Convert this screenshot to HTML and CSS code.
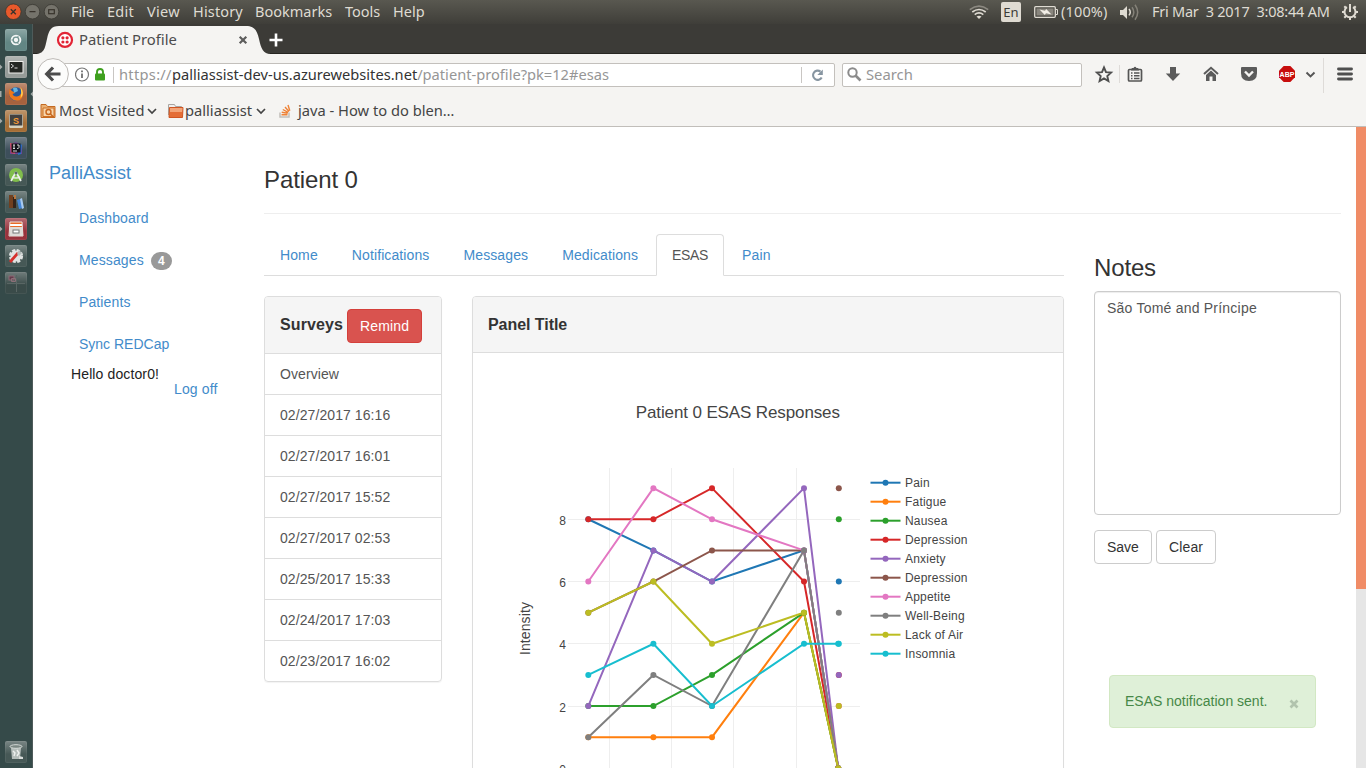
FILE: index.html
```html
<!DOCTYPE html>
<html lang="en">
<head>
<meta charset="utf-8">
<title>Patient Profile</title>
<link rel="stylesheet" href="styles.css">
</head>
<body>
<header class="topbar">
  <svg class="wm" width="62" height="24" viewBox="0 0 62 24">
    <circle cx="13.3" cy="11.7" r="7.8" fill="#e9592b" stroke="#38362f" stroke-width=".8"/>
    <circle cx="32.5" cy="11.7" r="7.3" fill="#75736b" stroke="#3a3832" stroke-width=".8"/>
    <circle cx="51.5" cy="11.7" r="7.3" fill="#75736b" stroke="#3a3832" stroke-width=".8"/>
    <path d="M10.8 9.2l5 5M15.8 9.2l-5 5M29.5 11.7h6" stroke="#38332c" stroke-width="1.3"/>
    <rect x="48.7" y="9.7" width="5.6" height="4" fill="none" stroke="#38332c" stroke-width="1.2"/>
  </svg>
  <nav class="menu">
    <span class="m1">File</span><span class="m2">Edit</span><span class="m3">View</span><span class="m4">History</span><span class="m5">Bookmarks</span><span class="m6">Tools</span><span class="m7">Help</span>
  </nav>
  <div class="tray">
    <svg class="wifi" width="22" height="24" viewBox="968 0 22 24" fill="none" stroke-width="1.7">
      <path d="M969.8 9.600Q979 2.800 988.200 9.600" stroke="#8c8981"/>
      <path d="M972.300 12Q979 7 985.700 12M974.700 14.600Q979 11.300 983.300 14.600" stroke="#dfdbd2"/>
      <path d="M976.500 16.500Q979 14.900 981.500 16.500L979 19z" fill="#dfdbd2" stroke="none"/>
    </svg>
    <span class="lang">En</span>
    <svg class="batt" width="24" height="24" viewBox="1034 0 24 24">
      <rect x="1034.700" y="6.700" width="20.600" height="10.600" rx="1" fill="none" stroke="#dfdbd2" stroke-width="1.300"/>
      <rect x="1036.500" y="8.500" width="17" height="7" fill="#89867e"/>
      <path d="M1056 9.500h1.500v5h-1.500" fill="none" stroke="#dfdbd2"/>
      <path d="M1039.500 9.500l5.500 1.300 1.200-1.800 5.300 5.500-5.500-1.300-1.200 1.800z" fill="#f2eee6"/>
    </svg>
    <span class="pct">(100%)</span>
    <svg class="vol" width="22" height="24" viewBox="1118 0 22 24" fill="none" stroke-width="1.500">
      <path d="M1120 10h3l4-4v13l-4-4h-3z" fill="#dfdbd2"/>
      <path d="M1129 9q2.500 3.200 0 6.400" stroke="#dfdbd2"/>
      <path d="M1132 7.300q3.600 5 0 10M1135 4.800q5.400 7.500 0 15" stroke="#858279"/>
    </svg>
    <span class="clock">Fri Mar&nbsp; 3 2017&nbsp; 3:08:44 AM</span>
    <svg class="gear" width="18" height="24" viewBox="1341 0 18 24" fill="none" stroke="#dfdbd2">
      <path d="M1347 7.200a5.500 5.500 0 1 0 6 0" stroke-width="2"/>
      <path d="M1350 4v8M1350 17v3M1342 12h3M1355 12h3M1344.300 17.700l2-2M1355.700 17.700l-2-2M1344.300 6.300l1.700 1.700M1355.700 6.300l-1.700 1.700" stroke-width="2"/>
    </svg>
  </div>
</header>
<div class="desktop">
  <aside class="dock">
    <span class="tile t-dash"><svg viewBox="0 0 22 22"><circle cx="11" cy="11" r="5.300" fill="#f4f7f6"/><circle cx="11" cy="11" r="2.800" fill="none" stroke="#719391" stroke-width="1.300"/><path d="M8.800 11H6.500M12 9l1.300-2M12 13l1.300 2" stroke="#719391"/></svg></span>
    <span class="tile t-term"><svg viewBox="0 0 22 22"><rect x="3.500" y="5" width="15" height="12.500" fill="#f0f0ed"/><rect x="4.500" y="6" width="13" height="10.500" fill="#242724"/><path d="M6 8l2.500 2L6 12M9.500 12h3" fill="none" stroke="#ddd"/></svg></span>
    <span class="tile t-fox"><svg viewBox="0 0 22 22"><circle cx="11" cy="11" r="6.800" fill="#25599d"/><path d="M8 5q2-1 4 0l1 3-4 2z" fill="#63b4df"/><path d="M4.500 6q-2 8 4 11 7 2.500 9.500-4V8l-2-3q1.500 8-4 8.500-3.500.5-4.500-2.500l2.500-1-3-2z" fill="#ed781b"/><path d="M15.500 4q4 6 1 10l-1 1q1.500-5 0-11z" fill="#ffd154"/></svg></span>
    <span class="tile t-subl"><svg viewBox="0 0 22 22"><rect x="4" y="4" width="14" height="14" rx="1.500" fill="#d6d0bc"/><rect x="4.700" y="4.500" width="12.600" height="11" fill="#424140"/><text x="11" y="13.700" text-anchor="middle" class="ic-s">S</text></svg></span>
    <span class="tile t-ij"><svg viewBox="0 0 22 22"><path d="M5 8l6-3 6 4 0 8H5z" fill="#754391"/><path d="M5 6l5 1v10l-4-1z" fill="#d65269"/><path d="M14 6l3 2-1 9-3 1z" fill="#2770c9"/><rect x="6.500" y="6.500" width="9" height="9" fill="#121319"/><path d="M8 8h2M9 8v3.500M8 11.500h2M12 8h2v2.500q0 1-2 1M8 14h4" fill="none" stroke="#eee" stroke-width=".9"/></svg></span>
    <span class="tile t-dark"><svg viewBox="0 0 22 22"><circle cx="11" cy="11" r="7" fill="#80bd4c"/><path d="M11 8l-5 9M11 8l5 9M7 13q4 2 8 0" fill="none" stroke="#ecf1eb" stroke-width="1.700"/><circle cx="11" cy="9" r="1.500" fill="#5b6968"/></svg></span>
    <span class="tile t-dark"><svg viewBox="0 0 22 22"><path d="M4 4h4v13H4z" fill="#714020"/><path d="M8 6h3v11H8z" fill="#34251c"/><path d="M9 4h2v4H9z" fill="#b57742"/><path d="M12 9l3-1 3 9-4 1z" fill="#4587d9"/><path d="M15 8l2-1 2 10-2 1z" fill="#a7caf0"/></svg></span>
    <span class="tile t-red"><svg viewBox="0 0 22 22"><path d="M5 4h12v6H5z" fill="#e96b29"/><path d="M5 6h12v2H5z" fill="#fff"/><path d="M5 4h12l1 14H4z" fill="none" stroke="#eee4de"/><rect x="4.500" y="9" width="13.500" height="9" rx="1" fill="#dedbd7"/><rect x="8" y="12" width="6" height="3" fill="#fff" stroke="#777"/></svg></span>
    <span class="tile t-dark"><svg viewBox="0 0 22 22"><circle cx="11" cy="11" r="5.600" fill="#e0e3e2" stroke="#e0e3e2" stroke-width="3" stroke-dasharray="3 1.400"/><path d="M5 17l8-9" stroke="#d6312d" stroke-width="2.800"/><path d="M12 9l2-4 3 3-3 3z" fill="#b4bcba"/></svg></span>
    <span class="tile t-work"><svg viewBox="0 0 22 22"><path d="M11.500 3v17M2 11.500h18" stroke="#596664"/><rect x="4" y="4" width="5" height="4" fill="#663b4c" stroke="#8c6c77"/><path d="M6.500 6.500h4v3h-4z" fill="none" stroke="#8c7078"/></svg></span>
    <span class="tile t-dark t-trash"><svg viewBox="0 0 22 22"><path d="M6 7l1 11h8l1-11z" fill="#b4bdba"/><ellipse cx="11" cy="5.500" rx="6" ry="1.800" fill="#7a8783" stroke="#d5dbd8"/><path d="M8 10l2 2-1 3M12 9l2 3-2 3" stroke="#edf0ee" stroke-width="1.400" fill="none"/><path d="M14 15l4 1v2h-4z" fill="#d8dcda"/></svg></span>
    <svg class="marks" width="33" height="260" viewBox="0 24 33 260" fill="#a4aaa8"><path d="M0 64.500l2.500 2.500L0 69.500zM0 118.500l2.500 2.500-2.500 2.500zM0 226.500l2.500 2.500-2.500 2.500zM33 91.500l-2.500 2.500 2.500 2.500zM0 91h1.500v6H0z"/></svg>
  </aside>
  <section class="browser">
    <div class="tabstrip">
      <svg class="tabshape" width="246" height="30" viewBox="33 24 246 30"><path d="M33 54h2c10 0 10-7 12-15 2-9 4-13 12-13h187c9 0 11 5 13 13 2 9 4 15 12 15h8z" fill="#f5f4f2"/>
        <circle cx="65" cy="39.900" r="7" fill="#fff" stroke="#e22435" stroke-width="2.200"/><g fill="#e22435"><circle cx="62.900" cy="37.800" r="1.600"/><circle cx="67.100" cy="37.800" r="1.600"/><circle cx="62.900" cy="42" r="1.600"/><circle cx="67.100" cy="42" r="1.600"/></g>
        <path d="M239.700 36.700l6.600 6.600M246.300 36.700l-6.600 6.600" stroke="#5d5d5c" stroke-width="2.200"/></svg>
      <span class="tabtitle">Patient Profile</span>
      <svg class="plus" width="14" height="14"><path d="M7 .5v13M.5 7h13" stroke="#fff" stroke-width="2.600"/></svg>
    </div>
    <div class="navbar">
      <svg class="back" width="34" height="34"><circle cx="17" cy="17" r="15.400" fill="#fcfcfb" stroke="#bdbab6"/><path d="M17 10.500L10.700 17l6.300 6.500M11 17h13.500" fill="none" stroke="#4c4c4c" stroke-width="3.200"/></svg>
      <div class="url">
        <svg width="43" height="22" viewBox="3 0 43 22"><circle cx="10" cy="10.500" r="6.500" fill="none" stroke="#777" stroke-width="1.200"/><path d="M10 9.500V14M10 6.500v1.800" stroke="#666" stroke-width="1.700"/><rect x="23" y="9.500" width="10" height="7" rx="1" fill="#3fa01f"/><path d="M25 10.500V8a3 3 0 0 1 6 0v2.500" fill="none" stroke="#3fa01f" stroke-width="1.900"/><path d="M41.500 3v16" stroke="#c9c6c3"/></svg>
        <span class="addr"><span class="a1">https://</span><b>palliassist-dev-us.azurewebsites.net</b><span class="a3">/patient-profile?pk=12#esas</span></span>
        <svg class="reload" width="34" height="22" viewBox="800 63 34 22"><path d="M801.500 66v16" stroke="#c9c6c3"/><path d="M820.500 70.600a4.600 4.600 0 1 0 1.200 5.800" fill="none" stroke="#8795a1" stroke-width="2.100"/><path d="M822.800 68.500v5.500h-5.500z" fill="#8795a1"/></svg>
      </div>
      <div class="search"><svg width="22" height="22"><circle cx="9.500" cy="8.500" r="4.200" fill="none" stroke="#8b8b8b" stroke-width="2"/><path d="M12.500 11.500l5 5" stroke="#8b8b8b" stroke-width="2.600"/></svg><span>Search</span></div>
      <svg class="tools" width="284" height="44" viewBox="1082 52 284 44">
        <path d="M1104 67.500l2 4.600 5.100.5-3.800 3.400 1.100 5-4.400-2.600-4.400 2.600 1.100-5-3.800-3.400 5.100-.5z" fill="none" stroke="#4f4f4f" stroke-width="1.900"/>
        <path d="M1119.500 65v18M1323.500 58v35" stroke="#dedbd8"/>
        <path d="M1129.500 69.500h11q1 0 1 1v9.500q0 1-1 1h-11q-1 0-1-1v-9.500q0-1 1-1z" fill="#f5f4f2" stroke="#555" stroke-width="1.700"/><path d="M1131 69.500l1-1.500h1.500q1.500-2.500 3 0h1.500l1 1.500v1h-8z" fill="#555"/><path d="M1131 73h1.500M1134 73h5.500M1131 75.800h1.500M1134 75.800h5.500M1131 78.600h1.500M1134 78.600h5.500" stroke="#555" stroke-width="1.500"/>
        <path d="M1170 67h6v6.500h4.200L1173 81l-7.200-7.500h4.200z" fill="#5b5b5b"/>
        <path d="M1204 74l7-6.200 7 6.200" fill="none" stroke="#5b5b5b" stroke-width="2"/><path d="M1206 75l5-4.500 5 4.500v6h-3.500v-4.500h-3V81h-3.500z" fill="#5b5b5b"/>
        <path d="M1241 68q0-1 1-1h14q1 0 1 1v5q0 8-8 8t-8-8z" fill="#5b5b5b"/><path d="M1245 71.500l4 4 4-4" fill="none" stroke="#f5f4f2" stroke-width="2.400"/>
        <path d="M1283.700 66h6.600l4.700 4.700v6.600l-4.700 4.700h-6.600l-4.700-4.700v-6.600z" fill="#c70d0d"/><text x="1287" y="76.800" text-anchor="middle" class="ic-abp">ABP</text>
        <path d="M1306.500 72.500l4 4 4-4" fill="none" stroke="#555" stroke-width="1.900"/>
        <path d="M1338.500 69h13M1338.500 74h13M1338.500 79h13" stroke="#4f4f4f" stroke-width="2.900" stroke-linecap="round"/>
      </svg>
    </div>
    <div class="bookmarks">
      <svg width="16" height="16" viewBox="0 0 16 16"><path d="M1 1.500h5l1.500 2H15v11H1z" fill="#eab174" stroke="#c46a22"/><path d="M3 5h11v8.500H3z" fill="#f6d6ad" stroke="#cd6f23"/><circle cx="8.500" cy="9" r="2.500" fill="none" stroke="#c9661c" stroke-width="1.400"/><path d="M10.500 11l3 3" stroke="#c9661c" stroke-width="1.500"/></svg>
      <span class="b1">Most Visited</span>
      <svg class="chev" width="10" height="8"><path d="M1 2l4 4 4-4" fill="none" stroke="#444" stroke-width="1.700"/></svg>
      <svg class="fold" width="17" height="16" viewBox="0 0 17 16"><path d="M1.500 12V1.500h6l1 2h6V12" fill="#eee" stroke="#a9a5a1"/><path d="M2.500 4.500H16l-.5 10H2z" fill="#e46d36" stroke="#cf5522"/><path d="M3 5h12.500l-.5 4H3z" fill="#f2a478"/></svg>
      <span class="b2">palliassist</span>
      <svg class="chev" width="10" height="8"><path d="M1 2l4 4 4-4" fill="none" stroke="#444" stroke-width="1.700"/></svg>
      <svg class="so" width="16" height="16" viewBox="0 0 16 16" fill="none"><path d="M2 9.500v4.500h9V9.500" stroke="#c1bdb9" stroke-width="1.500"/><path d="M3.500 11.800h6M3.700 9.200l6 1M4.800 6.500l5.300 2.800M7 4l4 4.500M10 2l1.800 5.800" stroke="#ef8236" stroke-width="1.400"/></svg>
      <span class="b3">java - How to do blen…</span>
    </div>
    <main class="page">
      <nav class="side">
        <a class="brand">PalliAssist</a>
        <a>Dashboard</a><a>Messages <span class="badge">4</span></a><a>Patients</a><a class="sync">Sync REDCap</a>
        <div class="hello">Hello doctor0!</div>
        <div class="logoff">Log off</div>
      </nav>
      <div class="content">
        <h1>Patient 0</h1>
        <div class="cols">
          <div class="left">
            <div class="tabs"><a>Home</a><a>Notifications</a><a>Messages</a><a>Medications</a><a class="active">ESAS</a><a>Pain</a></div>
            <div class="panels">
              <section class="panel surveys">
                <div class="phead"><b>Surveys</b><button class="remind">Remind</button></div>
                <div class="item">Overview</div><div class="item">02/27/2017 16:16</div><div class="item">02/27/2017 16:01</div><div class="item">02/27/2017 15:52</div><div class="item">02/27/2017 02:53</div><div class="item">02/25/2017 15:33</div><div class="item">02/24/2017 17:03</div><div class="item">02/23/2017 16:02</div>
              </section>
              <section class="panel chartpanel">
                <div class="phead"><b>Panel Title</b></div>
                <svg class="chart" id="chart" width="590" height="460" viewBox="473 353 590 460"></svg>
              </section>
            </div>
          </div>
          <aside class="notes">
            <h2>Notes</h2>
            <div class="area">São Tomé and Príncipe</div>
            <div class="btns"><button>Save</button><button class="clear">Clear</button></div>
            <div class="alert"><span>ESAS notification sent.</span><svg width="10" height="10"><path d="M1.500 1.500l7 7M8.500 1.500l-7 7" stroke="#b1c3ad" stroke-width="2.700"/></svg></div>
          </aside>
        </div>
      </div>
      <div class="scroll"><div class="thumb"></div></div>
    </main>
  </section>
</div>
<script src="chart.js"></script>
</body>
</html>
```
FILE: styles.css
```css
* { box-sizing: border-box; }
body { margin: 0; width: 1366px; height: 768px; overflow: hidden; display: flex; flex-direction: column; font: 14px/20px "Liberation Sans", Arial, sans-serif; color: #333; background: #fff; }
svg { display: block; flex: none; }
span, a { white-space: nowrap; }
.topbar { height: 24px; flex: none; display: flex; background: linear-gradient(#595850, #3f3e39); font: 14.5px/22px "Noto Sans", sans-serif; color: #dfdbd2; }
.wm { margin-right: 9px; }
.menu { display: flex; flex: 1; }
.m1 { width: 36px; }
.m2 { width: 40px; letter-spacing: .3px; }
.m3 { width: 46px; letter-spacing: .3px; }
.m4 { width: 62px; letter-spacing: .15px; }
.m5 { width: 90px; }
.m6 { width: 48px; }
.tray { width: 398px; display: flex; align-items: center; }
.lang { width: 20px; height: 20px; margin: 0 13px 0 11px; border-radius: 2px; background: #dfdbd2; color: #3c3b37; font-size: 13px; line-height: 20px; text-align: center; }
.pct { width: 48px; margin: 0 0 2px 3px; letter-spacing: .15px; }
.vol { margin-left: 9px; }
.clock { width: 189px; margin: 0 0 2px 12px; letter-spacing: -.24px; }
.desktop { display: flex; flex: 1; min-height: 0; }
.dock { width: 33px; padding: 5px 0 5px 5px; display: flex; flex-direction: column; gap: 5px; background: #354a49; border-right: 1px solid #4e5b5a; position: relative; }
.tile { width: 22px; height: 22px; flex: none; border-radius: 2px; border: 1px solid rgba(255,255,255,.06); background-image: linear-gradient(rgba(255,255,255,.28), rgba(255,255,255,0) 60%); background-origin: border-box; }
.tile svg { width: 22px; height: 22px; margin: -1px; }
.t-dash { background-color: #628684; }
.t-term { background-color: #969b98; }
.t-fox { background-color: #a6623e; }
.t-subl { background-color: #a56e36; }
.t-ij { background-color: #3d4f5b; }
.t-dark { background-color: #465856; }
.t-red { background-color: #98323c; }
.t-work { background-color: #3a4b49; }
.t-trash { margin-top: auto; }
.marks { position: absolute; left: 0; top: 0; }
.ic-s { font: bold 9px "Liberation Sans", sans-serif; fill: #f49b37; }
.ic-abp { font: bold 7px "Liberation Sans", sans-serif; fill: #fff; }
.browser { flex: 1; display: flex; flex-direction: column; background: #f5f4f2; font-family: "Noto Sans", sans-serif; min-width: 0; }
.tabstrip { height: 30px; flex: none; background: #3c3b37; border-bottom: 1px solid #262521; display: flex; align-items: flex-start; }
.tabshape { margin-right: -200px; }
.tabtitle { width: 190px; padding-top: 5px; color: #4c4c4c; z-index: 1; font-size: 14.8px; }
.plus { margin-top: 9px; }
.navbar { height: 43px; flex: none; display: flex; align-items: center; }
.back { margin: -3px 0 0 3px; z-index: 1; }
.url { width: 783px; height: 24px; margin: -2px 0 0 -18px; padding-left: 22px; background: #fff; border: 1px solid #c3c0bc; border-radius: 2px; display: flex; align-items: center; font-size: 14.65px; color: #969696; }
.addr { margin: 0 0 2px 1px; flex: 1; display: flex; }
.a1 { width: 53px; letter-spacing: .3px; }
.addr b { font-weight: normal; color: #333; }
.search { width: 240px; height: 24px; margin: -2px 0 0 7px; border: 1px solid #c3c0bc; border-radius: 2px; background: #fff; display: flex; align-items: center; font-size: 14.8px; color: #969696; }
.search span { margin: 0 0 2px 1px; }
.tools { margin-top: -3px; }
.bookmarks { height: 30px; flex: none; border-bottom: 1px solid #c1beba; padding: 0 0 2px 7px; display: flex; align-items: center; color: #444; font-size: 14.7px; }
.bookmarks span { margin-bottom: 2px; }
.b1 { width: 87px; margin-left: 3px; letter-spacing: .1px; }
.b2 { width: 70px; margin-left: 1px; }
.b3 { margin-left: 4px; }
.chev { margin-left: 1px; }
.fold { margin-left: 10px; }
.so { margin-left: 12px; }
.page { flex: 1; min-height: 0; background: #fff; display: flex; font-family: "Liberation Sans", Arial, sans-serif; }
.side { width: 231px; padding: 35px 0 0 16px; color: #428bca; letter-spacing: .12px; }
.side a { display: block; height: 42px; padding: 11px 0 0 30px; }
.side .brand { height: 35px; padding: 1px 0 0; font-size: 18px; letter-spacing: 0; }
.side .sync { letter-spacing: 0; }
.badge { display: inline-block; min-width: 21px; height: 18px; margin-left: 3px; border-radius: 10px; background: #999; color: #fff; font: bold 12px/18px "Liberation Sans", sans-serif; text-align: center; vertical-align: 0; }
.hello { color: #222; padding: 0 0 0 22px; height: 15px; margin-top: -1px; }
.logoff { padding-left: 125px; }
.content { width: 1077px; overflow: hidden; }
h1 { margin: 0; height: 87px; padding-top: 37px; border-bottom: 1px solid #eee; font-size: 24px; line-height: 32px; font-weight: normal; letter-spacing: -.1px; }
.cols { display: flex; gap: 30px; }
.left { width: 800px; padding-top: 20px; }
.tabs { height: 42px; display: flex; gap: 2px; border-bottom: 1px solid #ddd; color: #428bca; letter-spacing: .11px; }
.tabs a { height: 42px; padding: 10px 15px; border: 1px solid transparent; border-radius: 4px 4px 0 0; }
.tabs .active { width: 68px; color: #555; background: #fff; border-color: #ddd #ddd #fff; letter-spacing: -.4px; }
.panels { display: flex; gap: 30px; padding-top: 20px; align-items: flex-start; }
.panel { border: 1px solid #ddd; border-radius: 4px; box-shadow: 0 1px 1px rgba(0,0,0,.05); }
.surveys { width: 178px; height: 386px; }
.chartpanel { width: 592px; height: 600px; }
.phead { height: 56px; background: #f5f5f5; border-radius: 3px 3px 0 0; padding-left: 15px; display: flex; align-items: center; font-size: 16px; border-bottom: 1px solid #ddd; letter-spacing: -.05px; }
.surveys .phead { height: 57px; padding-top: 2px; }
.surveys .phead b { width: 63px; margin-top: -2px; letter-spacing: .12px; }
button { font: 14px/20px "Liberation Sans", Arial, sans-serif; height: 34px; padding: 6px 12px; border: 1px solid #ccc; border-radius: 4px; background: #fff; color: #333; }
.clear { width: 60px; letter-spacing: .15px; }
.remind { width: 75px; margin-left: 4px; background: #d9534f; border-color: #d43f3a; color: #fff; letter-spacing: .15px; }
.item { height: 41px; padding: 10px 15px; border-bottom: 1px solid #ddd; color: #555; letter-spacing: .08px; }
.item:last-child { border: 0; }
.notes { width: 247px; padding-top: 37px; }
h2 { margin: 0; height: 40px; font-size: 24px; line-height: 34px; font-weight: normal; letter-spacing: -.15px; }
.area { height: 224px; border: 1px solid #ccc; border-radius: 4px; padding: 6px 12px; color: #555; box-shadow: inset 0 1px 1px rgba(0,0,0,.075); letter-spacing: .22px; }
.btns { display: flex; gap: 4px; margin-top: 15px; }
.alert { width: 207px; height: 53px; margin: 111px 0 0 15px; padding: 0 16px 2px 15px; border: 1px solid #d2e8c3; border-radius: 4px; background: #dff0d8; color: #468847; display: flex; justify-content: space-between; align-items: center; }
.alert svg { margin-top: 6px; }
.scroll { width: 10px; margin-left: auto; background: #e6e6e6; }
.thumb { height: 462px; background: #f08c66; }
.chart text { font-family: "Liberation Sans", Arial, sans-serif; font-size: 12px; fill: #444; }
.chart .name { letter-spacing: .2px; }
.chart .title { font-size: 17px; letter-spacing: -.12px; }
.chart .axis { font-size: 14px; letter-spacing: .1px; }
.grid { stroke: #eee; }
.series { fill: none; stroke-width: 2; }
```
FILE: chart.js
```js
const ns = 'http://www.w3.org/2000/svg';
const chart = document.getElementById('chart');
function add(tag, attrs, text) {
  const el = document.createElementNS(ns, tag);
  for (const k in attrs) el.setAttribute(k, attrs[k]);
  if (text !== undefined) el.textContent = text;
  chart.appendChild(el);
}
const xs = [588.3, 653.4, 712, 804, 838.2];
const y = v => 768.3 - 31.13 * v;
const series = [
  ['Pain', '#1f77b4', [8, 7, 6, 7, 0], 6],
  ['Fatigue', '#ff7f0e', [1, 1, 1, 5, 0], 2],
  ['Nausea', '#2ca02c', [2, 2, 3, 5, 0], 8],
  ['Depression', '#d62728', [8, 8, 9, 6, 0], 3],
  ['Anxiety', '#9467bd', [2, 7, 6, 9, 0], 3],
  ['Depression', '#8c564b', [5, 6, 7, 7, 0], 9],
  ['Appetite', '#e377c2', [6, 9, 8, 7, 0], 2],
  ['Well-Being', '#7f7f7f', [1, 3, 2, 7, 0], 5],
  ['Lack of Air', '#bcbd22', [5, 6, 4, 5, 0], 2],
  ['Insomnia', '#17becf', [3, 4, 2, 4, 4], 4]
];
for (const x of [609.5, 671.5, 733.5, 796.5]) add('path', { d: `M${x} 468V790`, class: 'grid' });
for (const [v, gy] of [[8, 519.5], [6, 581.5], [4, 643.5], [2, 706.5], [0, 768.5]]) {
  add('path', { d: `M568 ${gy}H860`, class: 'grid' });
  add('text', { x: 566, y: gy + 5.5, 'text-anchor': 'end' }, v);
}
add('text', { x: 737.8, y: 418, 'text-anchor': 'middle', class: 'title' }, 'Patient 0 ESAS Responses');
add('text', { transform: 'translate(530 628.500) rotate(-90)', 'text-anchor': 'middle', class: 'axis' }, 'Intensity');
for (const [, color, vals] of series) {
  add('polyline', { points: vals.map((v, i) => `${xs[i]},${y(v)}`).join(' '), stroke: color, class: 'series' });
}
series.forEach(([name, color, vals, last], n) => {
  vals.forEach((v, i) => add('circle', { cx: xs[i], cy: y(v), r: 3, fill: color }));
  add('circle', { cx: 838.8, cy: y(last), r: 3, fill: color });
  const ly = 482.7 + 19 * n;
  add('path', { d: `M870.500 ${ly}h30`, stroke: color, class: 'series' });
  add('circle', { cx: 885.5, cy: ly, r: 3, fill: color });
  add('text', { x: 905, y: ly + 4.3, class: 'name' }, name);
});
```
